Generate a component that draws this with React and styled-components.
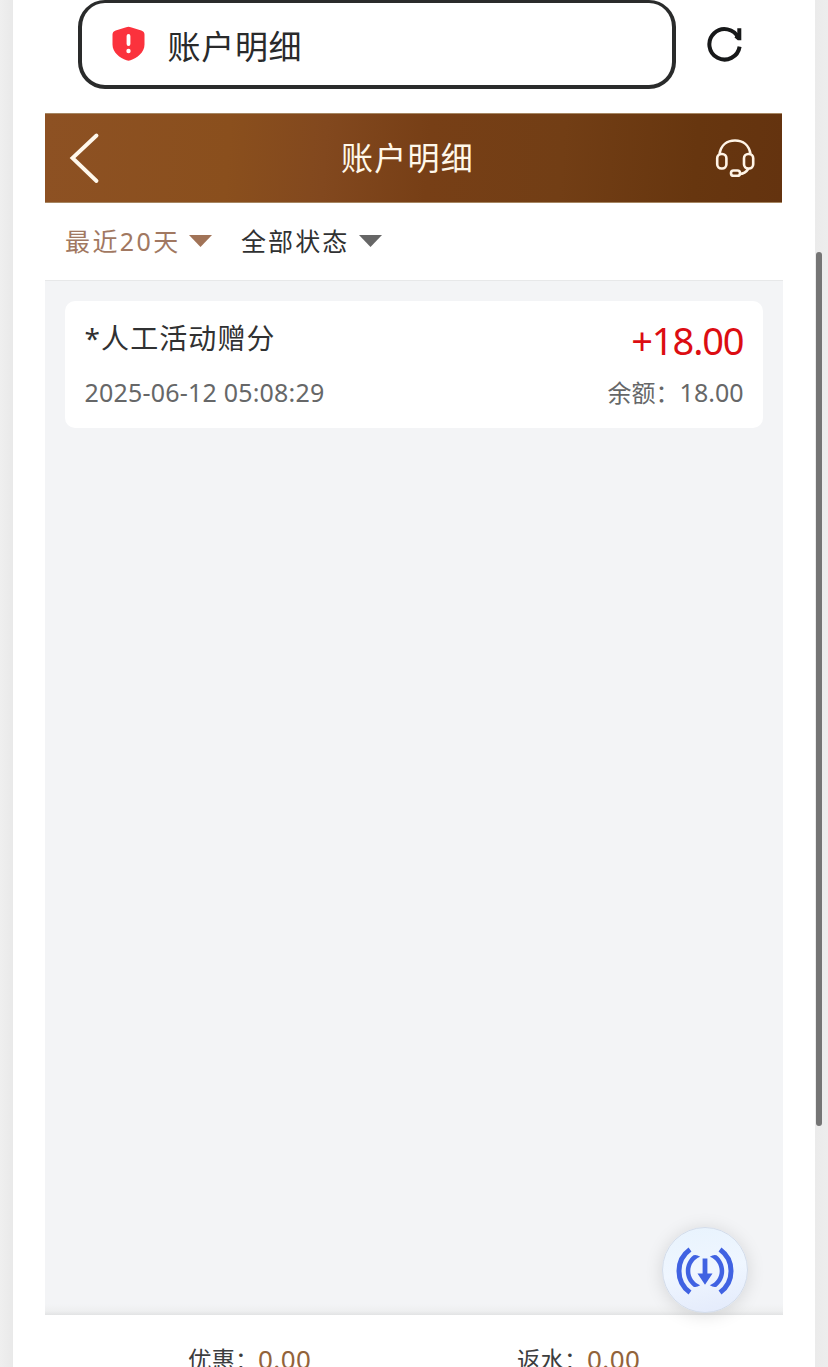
import React from "react";
import styled, { createGlobalStyle } from "styled-components";

const GlobalStyle = createGlobalStyle`
  * { box-sizing: border-box; }
  body {
    margin: 0;
    overflow: hidden;
    background: #ebebeb;
    font-family: "Noto Sans", "Noto Sans CJK SC", sans-serif;
  }
`;

const Viewport = styled.div`
  position: relative;
  height: 1367px;
  padding: 0 13px;
  overflow: hidden;
  background: linear-gradient(90deg, #efefef 0, #e9e9e9 13px, #ebebeb 815px, #ededed 100%);
`;

const Page = styled.main`
  display: flex;
  flex-direction: column;
  width: 802px;
  height: 100%;
  padding: 0 32px;
  background: #fff;
`;

const Scrollbar = styled.div`
  position: absolute;
  top: 252px;
  right: 6px;
  width: 6px;
  height: 874px;
  border-radius: 3px;
  background: #757575;
`;

const BrowserBar = styled.div`
  display: flex;
  flex: none;
  align-items: flex-start;
  height: 113px;
  padding-left: 33px;
`;

const AddressBox = styled.div`
  display: flex;
  align-items: center;
  width: 598px;
  height: 89px;
  margin-right: 31px;
  padding-left: 29.5px;
  border: 4px solid #2a2b2b;
  border-top-width: 3px;
  border-radius: 27px;
`;

const Text = styled.span`
  font-size: ${(p) => p.$size}px;
  line-height: ${(p) => p.$line || 40}px;
  letter-spacing: ${(p) => p.$spacing || 0}px;
  color: ${(p) => p.$color};
  white-space: nowrap;
`;

const AddressText = styled(Text)`
  margin-top: 5px;
  margin-left: 23px;
`;

const ReloadButton = styled.div`
  display: flex;
  width: 38px;
  height: 38px;
  margin-top: 25px;
`;

const Header = styled.header`
  display: grid;
  flex: none;
  grid-template-columns: 60px 1fr 68px;
  align-items: center;
  width: 737px;
  height: 90px;
  border: solid #a68662;
  border-width: 1px 0;
  background: linear-gradient(94deg, #8d5123 0%, #8a4f1d 25%, #82481e 38%, #773f16 52%, #723e15 70%, #67360f 88%, #64330f 100%);
`;

const HeaderTitle = styled.h1`
  margin: 0;
  font-size: 32px;
  font-weight: 400;
  line-height: 48px;
  letter-spacing: 1.2px;
  text-align: center;
  text-indent: -4px;
  color: #fff8ea;
`;

const HeaderIcon = styled.div`
  display: flex;
  justify-content: ${(p) => (p.$end ? "flex-start" : "flex-end")};
  padding-right: ${(p) => (p.$end ? 0 : 5)}px;
`;

const Filters = styled.div`
  display: flex;
  flex: none;
  align-items: flex-start;
  height: 78px;
  padding: 18px 20px 0;
  border-bottom: 1px solid #e7e8e9;
`;

const Filter = styled.div`
  display: flex;
  align-items: center;
  justify-content: space-between;
  width: ${(p) => p.$width}px;
  margin-right: 29px;
`;

const List = styled.section`
  flex: none;
  height: 1034px;
  padding: 20px;
  background: linear-gradient(180deg, #f3f4f6 0, #f3f4f6 1023px, #eeeff0 1030px, #e2e3e4 100%);
`;

const Card = styled.article`
  display: flex;
  justify-content: space-between;
  height: 127px;
  padding: 16px 19.5px 0 19.5px;
  border-radius: 10px;
  background: #fff;
`;

const CardColumn = styled.div`
  display: flex;
  flex-direction: column;
  align-items: ${(p) => p.$align};
`;

const TopLine = styled.div`
  display: flex;
  height: 55px;
`;

const BottomLine = styled.div`
  display: flex;
`;

const Totals = styled.footer`
  display: grid;
  flex: none;
  grid-template-columns: 329px 1fr;
  height: 70px;
  padding: 24px 0 0 143px;
  background: #fff;
`;

const Total = styled.div`
  display: flex;
  align-items: baseline;
`;

const TotalLabel = styled(Text)`
  width: 70px;
`;

const FloatButton = styled.div`
  position: absolute;
  top: 1227px;
  left: 662px;
  display: flex;
  align-items: center;
  justify-content: center;
  width: 86px;
  height: 86px;
  padding-top: 2px;
  border: 1px solid #d3dcea;
  border-radius: 50%;
  background: linear-gradient(170deg, #e8f3fd, #eff6ff 50%, #e3eafb);
  box-shadow: 0 2px 18px rgba(0, 0, 0, 0.13);
`;

const Shield = () => (
  <svg width="33" height="36" viewBox="0 0 33 36">
    <path d="M14.2 1.2Q16.5.3 18.8 1.2L29.3 4.6Q32.5 5.600 32.500 8.600V18.500C32.500 26.500 25 32 18.500 34.300q-2 .700-4 0C8 32 .5 26.500.5 18.500V8.600Q.5 5.600 3.700 4.600Z" fill="#fb323d" />
    <path d="M16.500 10v8" stroke="#fff" strokeWidth="3.800" strokeLinecap="round" />
    <circle cx="16.500" cy="25" r="2.200" fill="#fff" />
  </svg>
);

const Reload = () => (
  <svg width="38" height="38" viewBox="0 0 38 38">
    <path d="M31.4 13A15.2 15.2 0 1 0 32.6 21.6" fill="none" stroke="#171819" strokeWidth="4" />
    <path d="M30.3 3.3H34.3V15.2H30.8L27.500 12.500L30.3 8Z" fill="#171819" />
  </svg>
);

const Back = () => (
  <svg width="32" height="52" viewBox="0 0 32 52">
    <path d="M28.500 3.500L4.500 26L28.500 49" fill="none" stroke="#fff8ec" strokeWidth="3.900" strokeLinecap="round" strokeLinejoin="miter" />
  </svg>
);

const Headset = () => (
  <svg width="42" height="42" viewBox="0 0 42 42">
    <g fill="none" stroke="#fff4e6" strokeWidth="2.600">
      <path d="M5.500 17C7 8 13 3.500 21 3.500S35 8 36.500 17" />
      <rect x="3.200" y="17" width="9.200" height="14.500" rx="4.300" />
      <rect x="30" y="17" width="9.200" height="14.500" rx="4.300" />
      <path d="M34.500 31.500C32 35.500 29 37 25.500 37" />
      <rect x="17" y="33.500" width="9" height="5.300" rx="2.600" />
    </g>
  </svg>
);

const Caret = ({ color }) => (
  <svg width="23" height="12" viewBox="0 0 23 12">
    <path d="M0 0H23L11.500 12Z" fill={color} />
  </svg>
);

const Signal = () => (
  <svg width="60" height="48" viewBox="0 0 60 48">
    <g fill="none" stroke="#4062e2" strokeWidth="5">
      <path d="M15 2.500C.3 13 .3 35 15 45.500" />
      <path d="M45 2.500C59.700 13 59.700 35 45 45.500" />
    </g>
    <g fill="#4062e2">
      <path d="M18.500 8.300Q21.500 7.300 25.200 9.800C12 15 12 33 25.200 38.200Q21.500 40.700 18.500 39.700C8.200 31.500 8.200 16.500 18.500 8.300Z" />
      <path d="M41.500 8.300Q38.500 7.300 34.800 9.800C48 15 48 33 34.800 38.200Q38.500 40.700 41.500 39.700C51.800 31.500 51.800 16.500 41.500 8.300Z" />
      <path d="M27.600 11.500H32.400V26.500H37.500L30 37.800L22.500 26.500H27.600Z" />
    </g>
  </svg>
);

export default function App() {
  return (
    <Viewport>
      <GlobalStyle />
      <Page>
        <BrowserBar>
          <AddressBox>
            <Shield />
            <AddressText $size={33} $spacing={0.7} $color="#292a2b">账户明细</AddressText>
          </AddressBox>
          <ReloadButton><Reload /></ReloadButton>
        </BrowserBar>
        <Header>
          <HeaderIcon><Back /></HeaderIcon>
          <HeaderTitle>账户明细</HeaderTitle>
          <HeaderIcon $end><Headset /></HeaderIcon>
        </Header>
        <Filters>
          <Filter $width={147}>
            <Text $size={25} $spacing={2.4} $color="#a17861">最近20天</Text>
            <Caret color="#a17357" />
          </Filter>
          <Filter $width={141}>
            <Text $size={25} $spacing={2.1} $color="#303132">全部状态</Text>
            <Caret color="#666666" />
          </Filter>
        </Filters>
        <List>
          <Card>
            <CardColumn $align="flex-start">
              <TopLine>
                <Text $size={28} $line={42} $spacing={1.1} $color="#303132">*人工活动赠分</Text>
              </TopLine>
              <BottomLine>
                <Text $size={25} $spacing={0.2} $color="#666768">2025-06-12 05:08:29</Text>
              </BottomLine>
            </CardColumn>
            <CardColumn $align="flex-end">
              <TopLine>
                <Text $size={38} $line={46} $spacing={-1.1} $color="#dc0d12">+18.00</Text>
              </TopLine>
              <BottomLine>
                <Text $size={24} $line={42} $color="#666768">余额：</Text>
                <Text $size={25} $color="#666768">18.00</Text>
              </BottomLine>
            </CardColumn>
          </Card>
        </List>
        <Totals>
          <Total>
            <TotalLabel $size={23.500} $color="#3c3d3e">优惠：</TotalLabel>
            <Text $size={26} $spacing={0.4} $color="#92633a">0.00</Text>
          </Total>
          <Total>
            <TotalLabel $size={23.500} $color="#3c3d3e">返水：</TotalLabel>
            <Text $size={26} $spacing={0.4} $color="#92633a">0.00</Text>
          </Total>
        </Totals>
      </Page>
      <FloatButton><Signal /></FloatButton>
      <Scrollbar />
    </Viewport>
  );
}
